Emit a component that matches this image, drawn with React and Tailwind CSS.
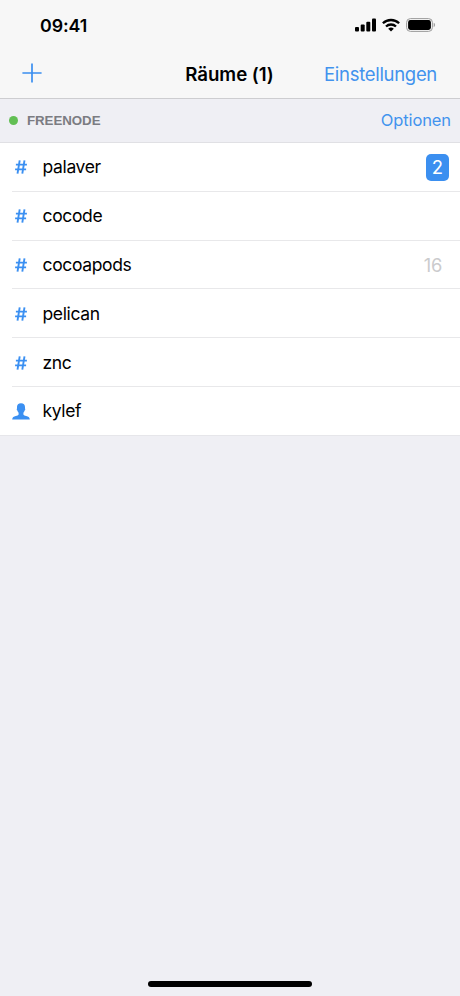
import clsx from 'clsx';

const rooms = [
  { name: 'palaver', badge: 2 },
  { name: 'cocode' },
  { name: 'cocoapods', unread: 16 },
  { name: 'pelican' },
  { name: 'znc' },
  { name: 'kylef', isUser: true },
];

const StatusBar = () => {
  return (
    <div className="flex items-center justify-between h-[50px] pl-10 pr-6">
      <span className="pt-0.5 text-[17.8px] font-semibold tracking-[-0.1px]">09:41</span>
      <div className="flex items-center gap-1.5">
        <svg width="21" height="14" viewBox="0 0 21 14">
          <rect x="0" y="9" width="4" height="4.5" rx="1" />
          <rect x="5.7" y="6.6" width="4" height="6.9" rx="1" />
          <rect x="11.3" y="3.7" width="4" height="9.8" rx="1" />
          <rect x="17" y="0.5" width="4" height="13" rx="1" />
        </svg>
        <svg width="18" height="14" viewBox="0 0 18 14">
          <g fill="none" stroke="#000" strokeWidth="2.3">
            <path d="M0.9 5.3a11.6 11.6 0 0 1 16.2 0" />
            <path d="M4 8.5a7.2 7.2 0 0 1 10 0" />
          </g>
          <path d="M9 13.4 6.2 10.7a4.1 4.1 0 0 1 5.6 0z" />
        </svg>
        <svg width="30" height="14" viewBox="0 0 30 14">
          <rect x="0.6" y="0.6" width="25.8" height="12.8" rx="3.8" fill="none" stroke="#9b9b9b" strokeWidth="1" />
          <rect x="2.1" y="2.1" width="22.8" height="9.8" rx="2.3" />
          <path d="M27.7 4.8a2.4 2.4 0 0 1 0 4.4z" fill="#a0a0a0" />
        </svg>
      </div>
    </div>
  );
};

const NavBar = () => {
  return (
    <div className="grid grid-cols-[1fr_auto_1fr] items-center h-[48px] pl-[22px] pr-[23px]">
      <button aria-label="+" className="-mt-0.5">
        <svg width="20" height="20" viewBox="0 0 20 20" stroke="#3b8ff0" strokeWidth="1.7">
          <path d="M10 0.4v19.2M0.4 10h19.2" />
        </svg>
      </button>
      <h1 className="pt-0.5 text-[18.7px] font-semibold tracking-[-0.05px]">Räume (1)</h1>
      <button className="justify-self-end pt-px text-[18.5px] tracking-[-0.3px] text-[#4293ee]">Einstellungen</button>
    </div>
  );
};

const RoomIcon = ({ isUser }) => {
  if (isUser) {
    return (
      <svg width="18" height="17" viewBox="0 0 18 17" fill="#3b90f2">
        <path d="M9 0.3C6.3 0.3 5 1.900 5 4.100v1.400c-.5.3-.3 1.700.4 2.100.2.900.6 1.600 1.200 2.200v1.600c-.3.900-1.500 1.200-2.800 1.600C1.700 13.600.4 14 .2 16.400h17.600c-.2-2.400-1.500-2.800-3.600-3.400-1.300-.4-2.500-.7-2.800-1.600V9.800c.6-.6 1-1.300 1.200-2.200.7-.4.9-1.800.4-2.100V4.100C13 1.900 11.700.3 9 .3z" />
      </svg>
    );
  }
  return (
    <svg width="12" height="14" viewBox="0 0 12 14" fill="none" stroke="#3b90f2" strokeWidth="1.9">
      <path d="M4.7 0.3 2.5 13.7M9.5 0.3 7.3 13.7M0.9 4.6h11M0.1 9.4h11" />
    </svg>
  );
};

const Room = ({ room, last }) => {
  return (
    <li className="flex h-[48.8px] pl-3">
      <div className="w-[18px] flex items-center justify-center">
        <RoomIcon isUser={room.isUser} />
      </div>
      <div className="relative flex-1 flex items-center justify-between pl-[12.5px] pr-[11px]">
        <span className="pt-[0.4px] text-[17.5px] tracking-[-0.35px]">{room.name}</span>
        {room.badge && (
          <span className="flex items-center justify-center w-[23px] h-[27px] rounded-[5px] bg-[#3b8ff0] text-white text-[18.5px]">
            {room.badge}
          </span>
        )}
        {room.unread && <span className="pt-px pr-[7px] text-[18.3px] tracking-[-0.3px] text-[#cbcbcd]">{room.unread}</span>}
        <div className={clsx('absolute bottom-0 right-0 -left-[18px] h-px', !last && 'bg-[#e8e8ea]')} />
      </div>
    </li>
  );
};

const App = () => {
  return (
    <div className="flex flex-col h-[996px] w-[460px] overflow-hidden bg-[#efeff4] text-black font-[Inter,sans-serif]">
      <header className="h-[99px] shrink-0 bg-[#f7f7f7] border-b border-[#cdcdd0]">
        <StatusBar />
        <NavBar />
      </header>

      <section>
        <div className="flex items-center justify-between h-11 pl-[9px] pr-[9px] border-b border-[#e0e0e4]">
          <div className="flex items-center gap-[9px]">
            <span className="size-[9px] rounded-full bg-[#62bf54]" />
            <h2 className="text-[13.3px] font-bold tracking-[-0.05px] text-[#7b7c82] font-['Liberation_Sans',sans-serif]">FREENODE</h2>
          </div>
          <button className="text-[16.5px] tracking-[-0.1px] text-[#4293ee]">Optionen</button>
        </div>
        <ul className="bg-white h-[293px] border-b border-[#e6e6ea]">
          {rooms.map((room, i) => (
            <Room key={room.name} room={room} last={i === rooms.length - 1} />
          ))}
        </ul>
      </section>

      <div className="mt-auto mb-[9px] self-center w-[164px] h-[6px] rounded-full bg-black" />
    </div>
  );
};

export default App;
